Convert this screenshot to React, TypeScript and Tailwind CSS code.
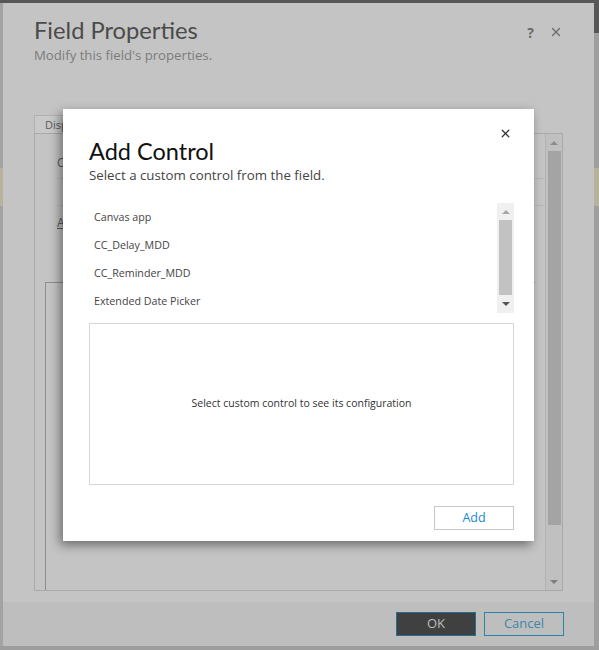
import { X } from "lucide-react";

const items = ["Canvas app", "CC_Delay_MDD", "CC_Reminder_MDD", "Extended Date Picker"];

export default function App() {
  return (
    <div
      className="relative w-[599px] h-[650px] overflow-hidden bg-[#9d9d9d] flex flex-col"
      style={{ fontFamily: '"Open Sans", "Noto Sans", sans-serif' }}
    >
      <div className="h-[3px] bg-[#575757] shrink-0" />
      <div className="flex flex-1">
        <div className="w-[3px] bg-[#a3a3a3] flex flex-col">
          <div className="h-[165px]" />
          <div className="h-[38px] bg-[#b6b29c]" />
        </div>

        {/* Field Properties dialog (dimmed) */}
        <div className="w-[591px] h-[643px] bg-[#c4c4c4] flex flex-col">
          <div className="flex justify-between pl-[31px] pr-[31px] pt-[11px]">
            <div>
              <div className="text-[23.7px] leading-[32px] text-[#4b4b4b] font-[Lato,sans-serif]">Field Properties</div>
              <div className="text-[13.2px] leading-[18px] text-[#7c7c7c]">Modify this field's properties.</div>
            </div>
            <div className="flex items-center gap-[15px] h-[32px] mt-[2px] text-[#6b6b6b]">
              <span className="text-[14px] font-bold">?</span>
              <X size={14} strokeWidth={2.2} />
            </div>
          </div>

          <div className="mt-[51px] ml-[31px] w-[529px] flex flex-col">
            <div className="h-[18px] w-[90px] bg-[#c9c9c9] border-t border-l border-[#b0b0b0] pl-[10px] text-[11px] leading-[17px] text-[#5a5a5a]">
              Display
            </div>
            <div className="h-[458px] border border-[#a9a9a9] flex">
              <div className="w-[10px]" />
              <div className="flex-1 flex flex-col border-r border-[#b2b2b2]">
                <div className="pl-[12px] pt-[21px] text-[12px] text-[#5a5a5a] leading-[16px]">C</div>
                <div className="ml-[12px] mt-[7px] h-px bg-[#b8b8b8]" />
                <div className="ml-[12px] mt-[26px] h-px bg-[#b8b8b8]" />
                <div className="pl-[12px] mt-[9px] text-[12px] text-[#5a5a5a] leading-[16px] underline">A</div>
                <div className="mt-[51px] flex-1 border-l border-t border-[#8c8c8c] mr-[10px]" />
              </div>
              <div className="w-[16px] bg-[#c0c0c0] flex flex-col items-center">
                <div className="h-[17px] flex items-center">
                  <div className="w-0 h-0 border-l-[4px] border-r-[4px] border-b-[4px] border-l-transparent border-r-transparent border-b-[#8d8d8d]" />
                </div>
                <div className="w-[13px] h-[374px] bg-[#a4a4a4]" />
                <div className="flex-1 flex items-end pb-[6px]">
                  <div className="w-0 h-0 border-l-[4px] border-r-[4px] border-t-[4px] border-l-transparent border-r-transparent border-t-[#7d7d7d]" />
                </div>
              </div>
            </div>
          </div>

          <div className="mt-[11px] flex-1 bg-[#bebebe] flex justify-end gap-[8px] pr-[30px] pt-[10px]">
            <div className="w-[80px] h-[24px] bg-[#404040] border border-[#22708f] flex items-center justify-center text-[13px] text-[#bdbdbd]">
              OK
            </div>
            <div className="w-[80px] h-[24px] border border-[#2c84a5] flex items-center justify-center text-[13px] text-[#3d87a9]">
              Cancel
            </div>
          </div>
        </div>

        <div className="flex-1 bg-[#9f9f9f] flex flex-col">
          <div className="h-[30px] bg-[#575757]" />
          <div className="h-[135px]" />
          <div className="h-[38px] bg-[#b6b29c]" />
        </div>
      </div>
      <div className="h-[4px] shrink-0" />

      {/* Add Control modal */}
      <div className="absolute left-[63px] top-[109px] w-[471px] h-[432px] bg-white shadow-[-3px_4px_10px_rgba(0,0,0,0.45)] flex flex-col pl-[26px] pr-[20px]">
        <div className="flex justify-end pt-[18px] h-[30px]">
          <X size={13} strokeWidth={2.4} className="text-[#333] mr-[2px]" />
        </div>
        <div className="text-[23.5px] leading-[32px] text-[#111] mt-[-4px] font-[Lato,sans-serif]">Add Control</div>
        <div className="text-[13.3px] leading-[18px] text-[#444] mt-[-1px]">Select a custom control from the field.</div>

        <div className="mt-[19px] h-[110px] flex overflow-hidden">
          <div className="flex-1 pl-[5px] flex flex-col">
            {items.map((it) => (
              <div key={it} className="h-[28px] shrink-0 flex items-center text-[10.7px] text-[#444]">
                {it}
              </div>
            ))}
          </div>
          <div className="w-[17px] bg-[#f0f0f0] flex flex-col items-center">
            <div className="h-[17px] flex items-center">
              <div className="w-0 h-0 border-l-[4px] border-r-[4px] border-b-[4px] border-l-transparent border-r-transparent border-b-[#a6a6a6]" />
            </div>
            <div className="w-[13px] h-[75px] bg-[#c2c2c2]" />
            <div className="flex-1 flex items-center">
              <div className="w-0 h-0 border-l-[4px] border-r-[4px] border-t-[4px] border-l-transparent border-r-transparent border-t-[#555]" />
            </div>
          </div>
        </div>

        <div className="mt-[10px] h-[162px] border border-[#d6d6d6] flex items-center justify-center text-[10.5px] text-[#333]">
          Select custom control to see its configuration
        </div>

        <div className="mt-[21px] flex justify-end">
          <div className="w-[80px] h-[24px] border border-[#c8c8c8] flex items-center justify-center text-[12.5px] text-[#1a86d9]">
            Add
          </div>
        </div>
      </div>
    </div>
  );
}
